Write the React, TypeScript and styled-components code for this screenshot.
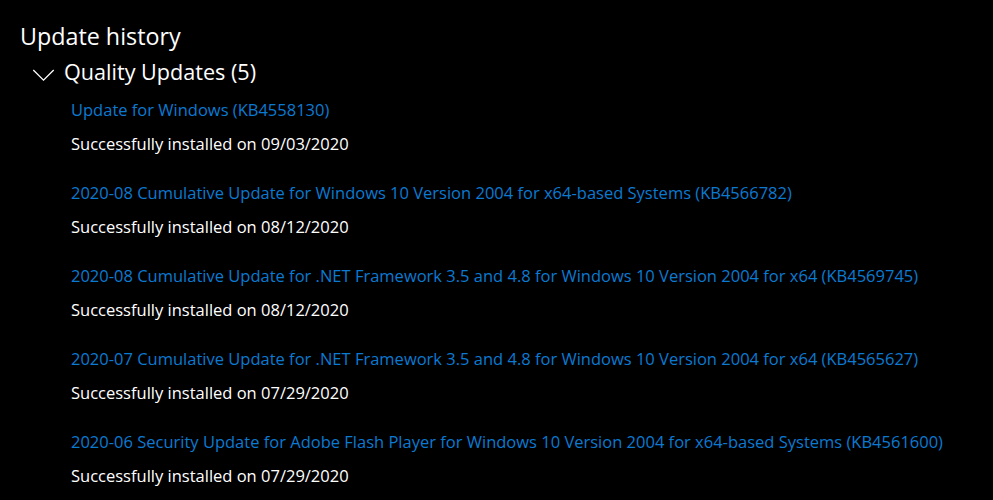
import styled, { createGlobalStyle } from 'styled-components';

const GlobalStyle = createGlobalStyle`
  html, body {
    margin: 0;
    padding: 0;
    background: #000;
  }
  body {
    font-family: 'Open Sans', 'Noto Sans', sans-serif;
    color: #fff;
  }
`;

const updates = [
  { title: 'Update for Windows (KB4558130)', date: '09/03/2020' },
  { title: '2020-08 Cumulative Update for Windows 10 Version 2004 for x64-based Systems (KB4566782)', date: '08/12/2020' },
  { title: '2020-08 Cumulative Update for .NET Framework 3.5 and 4.8 for Windows 10 Version 2004 for x64 (KB4569745)', date: '08/12/2020' },
  { title: '2020-07 Cumulative Update for .NET Framework 3.5 and 4.8 for Windows 10 Version 2004 for x64 (KB4565627)', date: '07/29/2020' },
  { title: '2020-06 Security Update for Adobe Flash Player for Windows 10 Version 2004 for x64-based Systems (KB4561600)', date: '07/29/2020' },
];

export default function App() {
  return (
    <>
      <GlobalStyle />
      <Page>
        <Heading>Update history</Heading>
        <GroupHeader>
          <Chevron viewBox="0 0 24 14" aria-hidden>
            <path d="M1 1 L12 12 L23 1" fill="none" stroke="#fff" strokeWidth="1.4" />
          </Chevron>
          <GroupTitle>Quality Updates (5)</GroupTitle>
        </GroupHeader>
        <List>
          {updates.map((u) => (
            <Item key={u.title}>
              <Link href="#">{u.title}</Link>
              <Status>Successfully installed on {u.date}</Status>
            </Item>
          ))}
        </List>
      </Page>
    </>
  );
}

const Page = styled.div`
  width: 993px;
  height: 500px;
  overflow: hidden;
  padding: 20px 0 0 20px;
  box-sizing: border-box;
`;

const Heading = styled.h1`
  margin: 0;
  font-size: 23.3px;
  font-weight: 400;
  line-height: 32px;
`;

const GroupHeader = styled.div`
  display: flex;
  align-items: center;
  gap: 9px;
  margin: 4px 0 0 12px;
  height: 32px;
`;

const Chevron = styled.svg`
  width: 23px;
  height: 13px;
  margin-top: 6px;
`;

const GroupTitle = styled.span`
  font-size: 21.6px;
  line-height: 32px;
`;

const List = styled.div`
  display: flex;
  flex-direction: column;
  gap: 29px;
  margin: 12px 0 0 51px;
`;

const Item = styled.div`
  display: flex;
  flex-direction: column;
  gap: 14px;
`;

const Link = styled.a`
  color: #0a7ad2;
  text-decoration: none;
  font-size: 16.5px;
  line-height: 20px;
`;

const Status = styled.span`
  font-size: 16.5px;
  line-height: 20px;
`;
